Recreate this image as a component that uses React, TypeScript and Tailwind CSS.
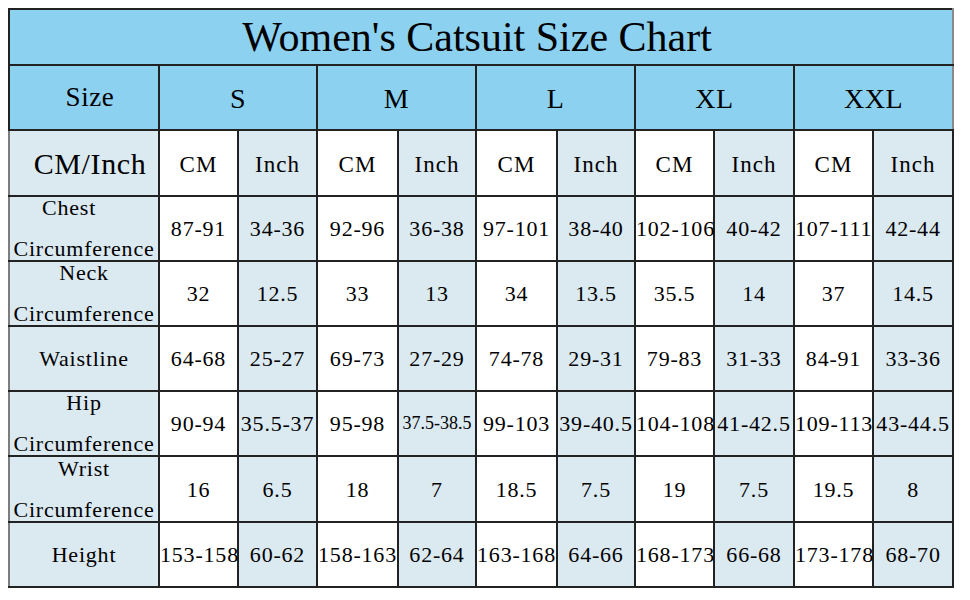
const sizes = ['S', 'M', 'L', 'XL', 'XXL']

const colWidths = [150, 79, 79, 81, 78, 81, 78, 79, 80, 79, 80]

const cell = "[font-family:'Liberation_Serif',serif] border-2 border-[#222] text-center"

interface Row {
  label: string
  sub?: string
  values: string[]
  padRight?: boolean
}

const rows: Row[] = [
  {
    label: 'Chest',
    sub: 'Circumference',
    padRight: true,
    values: ['87-91', '34-36', '92-96', '36-38', '97-101', '38-40', '102-106', '40-42', '107-111', '42-44'],
  },
  {
    label: 'Neck',
    sub: 'Circumference',
    values: ['32', '12.5', '33', '13', '34', '13.5', '35.5', '14', '37', '14.5'],
  },
  {
    label: 'Waistline',
    values: ['64-68', '25-27', '69-73', '27-29', '74-78', '29-31', '79-83', '31-33', '84-91', '33-36'],
  },
  {
    label: 'Hip',
    sub: 'Circumference',
    values: ['90-94', '35.5-37', '95-98', '37.5-38.5', '99-103', '39-40.5', '104-108', '41-42.5', '109-113', '43-44.5'],
  },
  {
    label: 'Wrist',
    sub: 'Circumference',
    values: ['16', '6.5', '18', '7', '18.5', '7.5', '19', '7.5', '19.5', '8'],
  },
  {
    label: 'Height',
    values: ['153-158', '60-62', '158-163', '62-64', '163-168', '64-66', '168-173', '66-68', '173-178', '68-70'],
  },
]

const rowHeights = [65, 65, 65, 65, 66, 65]

export default function App() {
  return (
    <div className="min-h-[600px] bg-white p-2 text-black">
      <table className="w-[944px] table-fixed border-collapse border-l-2 border-b-2 border-l-[#7d7d7d] border-b-[#8a8a8a]">
        <colgroup>
          {colWidths.map((w, i) => (
            <col key={i} style={{ width: w }} />
          ))}
        </colgroup>
        <tbody>
          <tr className="h-[56px]">
            <td colSpan={11} className={`${cell} border-r-[#8a8a8a] bg-[#8dd1f1] pr-2 text-[42px] leading-none`}>
              Women's Catsuit Size Chart
            </td>
          </tr>
          <tr className="h-[65px]">
            <td className={`${cell} bg-[#8dd1f1] pl-3 text-[27px] tracking-[0.6px]`}>Size</td>
            {sizes.map((s) => (
              <td
                key={s}
                colSpan={2}
                className={`${cell} bg-[#8dd1f1] pt-[3px] text-[28px] tracking-[0.5px] last:border-r-[#8a8a8a]`}
              >
                {s}
              </td>
            ))}
          </tr>
          <tr className="h-[66px]">
            <td className={`${cell} border-l-[#7d7d7d] bg-[#dbe9f1] pl-3 text-[30px] tracking-[0.6px]`}>CM/Inch</td>
            {sizes.map((s) => [
              <td key={s + 'cm'} className={`${cell} bg-white pt-[4px] text-[23px] tracking-[1px]`}>
                CM
              </td>,
              <td key={s + 'in'} className={`${cell} bg-[#dbe9f1] pt-[4px] text-[23px] tracking-[1px]`}>
                Inch
              </td>,
            ])}
          </tr>
          {rows.map((row, ri) => (
            <tr key={row.label} style={{ height: rowHeights[ri] }}>
              <td className={`${cell} border-l-[#7d7d7d] bg-[#dbe9f1] p-0 text-[22px] tracking-[0.8px]`}>
                {row.sub ? (
                  <div className="flex h-[63px] flex-col items-center justify-between leading-[22px]">
                    <span className={row.padRight ? 'pr-[30px]' : ''}>{row.label}</span>
                    <span>{row.sub}</span>
                  </div>
                ) : (
                  row.label
                )}
              </td>
              {row.values.map((v, vi) => (
                <td
                  key={vi}
                  className={`${cell} p-0 whitespace-nowrap ${vi % 2 === 1 ? 'bg-[#dbe9f1]' : 'bg-white'} ${
                    v.length > 8 ? 'text-[18px] tracking-[0px]' : 'text-[22px] tracking-[0.8px]'
                  }`}
                >
                  {v}
                </td>
              ))}
            </tr>
          ))}
        </tbody>
      </table>
    </div>
  )
}
